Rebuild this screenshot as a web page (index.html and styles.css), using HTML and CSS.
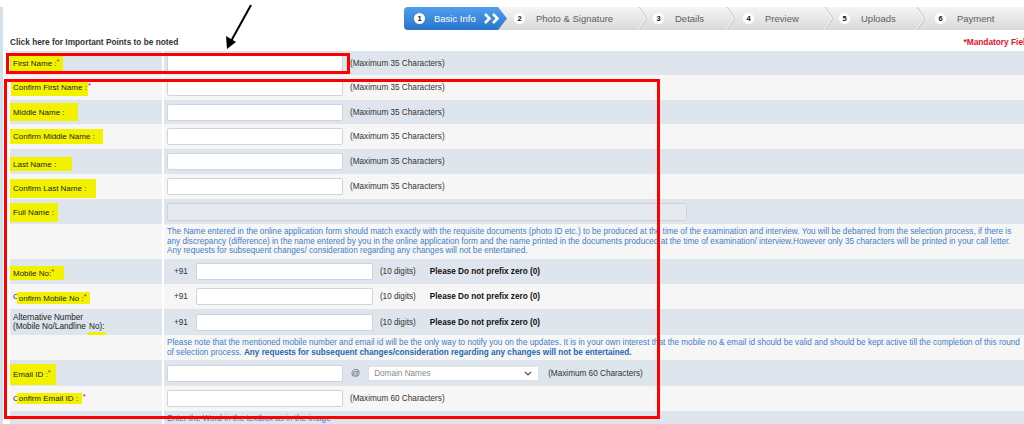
FILE: index.html
```html
<!DOCTYPE html>
<html lang="en">
<head>
<meta charset="utf-8">
<title>Basic Info</title>
<link rel="stylesheet" href="styles.css">
</head>
<body>
<div class="page">
  <div class="stepper">
    <div class="step step-active">
      <span class="num">1</span><span class="label">Basic Info</span>
      <svg class="dbl" width="16" height="11" viewBox="0 0 16 11"><polyline points="1,1 5.5,5.5 1,10" /><polyline points="9,1 13.5,5.5 9,10" /></svg>
    </div>
    <div class="step step-2"><span class="num">2</span><span class="label">Photo &amp; Signature</span><svg class="sep" width="9" height="23" viewBox="0 0 9 23"><polyline class="hi" points="0,0 8,11.5 0,23"/><polyline class="lo" points="1,0 9,11.5 1,23"/></svg></div>
    <div class="step step-3"><span class="num">3</span><span class="label">Details</span><svg class="sep" width="9" height="23" viewBox="0 0 9 23"><polyline class="hi" points="0,0 8,11.5 0,23"/><polyline class="lo" points="1,0 9,11.5 1,23"/></svg></div>
    <div class="step step-4"><span class="num">4</span><span class="label">Preview</span><svg class="sep" width="9" height="23" viewBox="0 0 9 23"><polyline class="hi" points="0,0 8,11.5 0,23"/><polyline class="lo" points="1,0 9,11.5 1,23"/></svg></div>
    <div class="step step-5"><span class="num">5</span><span class="label">Uploads</span><svg class="sep" width="9" height="23" viewBox="0 0 9 23"><polyline class="hi" points="0,0 8,11.5 0,23"/><polyline class="lo" points="1,0 9,11.5 1,23"/></svg></div>
    <div class="step step-6"><span class="num">6</span><span class="label">Payment</span></div>
  </div>

  <div class="titlebar">
    <a class="important">Click here for Important Points to be noted</a>
    <span class="mandatory">*Mandatory Fields</span>
  </div>

  <div class="form">
    <div class="row a h24">
      <div class="lab"><span class="hl hl-first">First Name : <span class="req">*</span></span></div>
      <div class="val"><input class="txt" type="text"><span class="hint">(Maximum 35 Characters)</span></div>
    </div>
    <div class="row b">
      <div class="lab"><span class="hl hl-cfirst">Confirm First Name :</span> <span class="req">*</span></div>
      <div class="val"><input class="txt" type="text"><span class="hint">(Maximum 35 Characters)</span></div>
    </div>
    <div class="row a h24">
      <div class="lab"><span class="hl hl-middle">Middle Name :</span></div>
      <div class="val"><input class="txt" type="text"><span class="hint">(Maximum 35 Characters)</span></div>
    </div>
    <div class="row b">
      <div class="lab"><span class="hl hl-cmiddle">Confirm Middle Name :</span></div>
      <div class="val"><input class="txt" type="text"><span class="hint">(Maximum 35 Characters)</span></div>
    </div>
    <div class="row a">
      <div class="lab"><span class="hl hl-last">Last Name :</span></div>
      <div class="val"><input class="txt" type="text"><span class="hint">(Maximum 35 Characters)</span></div>
    </div>
    <div class="row b">
      <div class="lab"><span class="hl hl-clast">Confirm Last Name :</span></div>
      <div class="val"><input class="txt" type="text"><span class="hint">(Maximum 35 Characters)</span></div>
    </div>
    <div class="row a">
      <div class="lab"><span class="hl hl-full">Full Name :</span></div>
      <div class="val"><input class="txt txt-full" type="text" disabled></div>
    </div>
    <div class="row b note h35">
      <div class="lab"></div>
      <div class="val"><p class="note-text">The Name entered in the online application form should match exactly with the requisite documents (photo ID etc.) to be produced at the time of the examination and interview. You will be debarred from the selection process, if there is<br>any discrepancy (difference) in the name entered by you in the online application form and the name printed in the documents produced at the time of examination/ interview.However only 35 characters will be printed in your call letter.<br>Any requests for subsequent changes/ consideration regarding any changes will not be entertained.</p></div>
    </div>
    <div class="row a">
      <div class="lab"><span class="hl hl-mobile">Mobile No:<span class="req">*</span></span></div>
      <div class="val"><span class="cc">+91</span><input class="txt txt-phone" type="text"><span class="hint">(10 digits)</span><b class="warn">Please Do not prefix zero (0)</b></div>
    </div>
    <div class="row b">
      <div class="lab">C<span class="hl hl-c hl-cmobile">onfirm Mobile No :<span class="req">*</span></span></div>
      <div class="val"><span class="cc">+91</span><input class="txt txt-phone" type="text"><span class="hint">(10 digits)</span><b class="warn">Please Do not prefix zero (0)</b></div>
    </div>
    <div class="row a h26">
      <div class="lab lab-plain"><span>Alternative Number<br>(Mobile No/Landline <span class="under">No):</span></span></div>
      <div class="val"><span class="cc">+91</span><input class="txt txt-phone" type="text"><span class="hint">(10 digits)</span><b class="warn">Please Do not prefix zero (0)</b></div>
    </div>
    <div class="row b note">
      <div class="lab"></div>
      <div class="val"><p class="note-text">Please note that the mentioned mobile number and email id will be the only way to notify you on the updates. It is in your own interest that the mobile no &amp; email id should be valid and should be kept active till the completion of this round<br>of selection process. <b>Any requests for subsequent changes/consideration regarding any changes will not be entertained.</b></p></div>
    </div>
    <div class="row a h26">
      <div class="lab"><span class="hl hl-email">Email ID :<span class="req">*</span></span></div>
      <div class="val"><input class="txt" type="text"><span class="at">@</span><div class="select"><span>Domain Names</span><svg width="8" height="5" viewBox="0 0 8 5"><polyline points="1,1 4,4 7,1"/></svg></div><span class="hint">(Maximum 60 Characters)</span></div>
    </div>
    <div class="row b">
      <div class="lab">C<span class="hl hl-c hl-cemail">onfirm Email ID :</span><span class="req">*</span></div>
      <div class="val"><input class="txt" type="text"><span class="hint">(Maximum 60 Characters)</span></div>
    </div>
    <div class="row a last">
      <div class="lab"></div>
      <div class="val"><span class="note-text">Enter the Word in the textbox as in the image</span></div>
    </div>
  </div>
</div>

<div class="annot box1"></div>
<div class="annot box2"></div>
<svg class="arrow" width="40" height="52" viewBox="0 0 40 52">
  <line x1="35" y1="5" x2="14" y2="43" />
  <polygon points="11,49 10,36 20,42" />
</svg>
</body>
</html>
```

FILE: styles.css
```css
* { box-sizing: border-box; }

html, body {
  margin: 0;
  padding: 0;
  background: #fff;
  overflow: hidden;
}

body {
  position: relative;
  width: 1024px;
  height: 424px;
  font-family: "Liberation Sans", Arial, sans-serif;
  font-size: 8.2px;
  color: #333;
}

.page {
  width: 1035px;
  height: 424px;
  border-left: 3px solid #d4dfe9;
  padding-left: 7px;
}

/* ---------- stepper ---------- */
.stepper {
  display: flex;
  height: 23px;
  margin: 7px 0 0 394px;
  background: linear-gradient(#f5f5f5, #d9d9d9);
  border-radius: 4px 0 0 4px;
  font-size: 9.5px;
  color: #5e5e5e;
}

.step {
  display: flex;
  align-items: center;
  flex: none;
  padding-left: 7px;
}

.step-active {
  width: 103px;
  padding-left: 10px;
  color: #fff;
  background: linear-gradient(#4fa0ec, #2a74cd);
  border-radius: 4px 0 0 4px;
  clip-path: polygon(0 0, calc(100% - 9px) 0, 100% 50%, calc(100% - 9px) 100%, 0 100%);
}

.step-2 { width: 140px; }
.step-3 { width: 88px; padding-left: 6px; }
.step-4 { width: 98px; padding-left: 8px; }
.step-5 { width: 92px; padding-left: 6px; }
.step-6 { flex: 1; padding-left: 10px; }

.num {
  width: 11px;
  height: 11px;
  border-radius: 50%;
  background: #fff;
  color: #111;
  font-weight: bold;
  font-size: 7.5px;
  display: flex;
  align-items: center;
  justify-content: center;
  flex: none;
}

.label { margin-left: 11px; white-space: nowrap; }
.step-active .label { margin-left: 9px; }

.dbl { margin-left: 8px; }
.dbl polyline { fill: none; stroke: #fff; stroke-width: 2.6; stroke-linejoin: miter; }

.sep { margin-left: auto; flex: none; }
.sep polyline { fill: none; stroke-width: 1; }
.sep .hi { stroke: #fbfbfb; }
.sep .lo { stroke: #c4c4c4; }

/* ---------- title bar ---------- */
.titlebar {
  height: 21px;
  padding-top: 3px;
  display: flex;
  align-items: center;
  justify-content: space-between;
  white-space: nowrap;
}

.important { font-weight: bold; font-size: 8.3px; color: #333; }
.mandatory { font-weight: bold; font-size: 8.3px; color: #e3102c; }

/* ---------- form ---------- */
.form { width: 1030px; }

.row {
  display: grid;
  grid-template-columns: 152px 1fr;
  column-gap: 2px;
  height: 25px;
}
.row.h24 { height: 24px; }
.row.h26 { height: 26px; }
.row.h35 { height: 35px; }
.row.last { height: 20px; }

.row > div { display: flex; align-items: center; }
.row.a > div { background: #dee5ed; }
.row.b > div { background: #f6f6f6; }

.lab {
  padding-left: 3px;
  font-size: 8px;
  color: #222;
  white-space: nowrap;
}
.lab-plain {
  font-size: 8.2px;
  line-height: 9.5px;
}

.val { padding-left: 3px; white-space: nowrap; }

.req { color: #e0101c; position: relative; top: -2px; }

.hl {
  display: inline-flex;
  align-items: center;
  background: #f2f200;
  margin-left: -3px;
  padding-left: 3px;
}
.hl-c { margin-left: -2px; padding-left: 2px; }
.hl-first   { width: 53px; height: 17px; }
.hl-cfirst  { width: 77px; height: 16px; margin-left: -2px; padding-left: 2px; }
.hl-middle  { width: 68px; height: 18px; }
.hl-cmiddle { width: 93px; height: 15px; }
.hl-last    { width: 62px; height: 14px; margin-top: 5px; }
.hl-clast   { width: 86px; height: 19px; margin-top: 4px; }
.hl-full    { width: 48px; height: 19px; margin-top: 2px; }
.hl-mobile  { width: 54px; height: 14px; margin-top: 3px; }
.hl-cmobile { width: 73px; height: 12px; margin-top: 3px; }
.hl-email   { width: 46px; height: 21px; margin-top: 3px; }
.hl-cemail  { width: 65px; height: 11px; margin-right: 1px; }

.under {
  padding: 0 1px 7px;
  background: linear-gradient(#f2f200, #f2f200) no-repeat left bottom / 100% 6px;
}

.txt {
  width: 176px;
  height: 17px;
  margin: 0;
  padding: 0 4px;
  border: 1px solid #cfd4da;
  border-radius: 2px;
  background: #fff;
  font: inherit;
}
.txt-full {
  width: 520px;
  height: 18px;
  background: #e6e9ed;
  border-color: #cdd3da;
}
.txt-phone { width: 177px; margin-left: 8px; }

.hint { margin-left: 7px; color: #333; }

.cc { margin-left: 7px; color: #333; }
.warn { margin-left: 14px; color: #111; }

.at { margin-left: 8px; color: #555; font-size: 9px; }

.select {
  margin-left: 8px;
  width: 171px;
  height: 15px;
  background: #fff;
  border: 1px solid #dcdfe3;
  display: flex;
  align-items: center;
  justify-content: space-between;
  padding: 0 6px 0 5px;
  color: #8a8a8a;
}
.select polyline { fill: none; stroke: #555; stroke-width: 1.2; }
.select + .hint { margin-left: 9px; }

.note > .val { display: block; padding: 3px 3px 0 3px; }
.note-text {
  margin: 0;
  line-height: 9.7px;
  color: #3f80c8;
  white-space: nowrap;
}
.note-text b { color: #2766b2; }
.row.last > .val { align-items: flex-start; padding-top: 3px; }

/* ---------- annotations ---------- */
.annot {
  position: absolute;
  border: 3px solid #ff0000;
}
.box1 { left: 6px; top: 53px; width: 344px; height: 21px; }
.box2 { left: 4px; top: 79px; width: 656px; height: 340px; }

.arrow { position: absolute; left: 216px; top: 0; }
.arrow line { stroke: #000; stroke-width: 2; }
.arrow polygon { fill: #000; }
```
